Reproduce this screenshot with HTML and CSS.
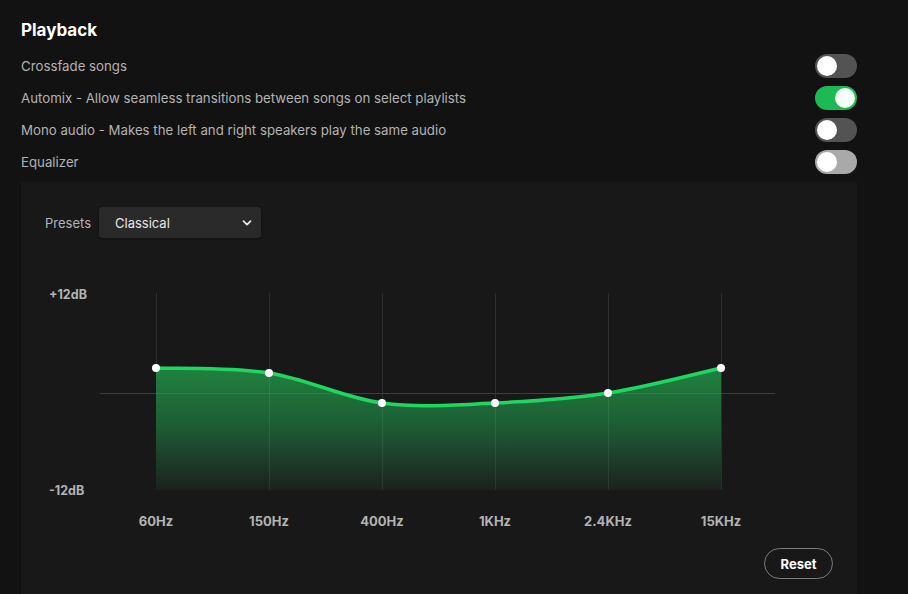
FILE: index.html
```html
<!DOCTYPE html>
<html>
<head>
<meta charset="utf-8">
<link rel="stylesheet" href="styles.css">
</head>
<body>
<div class="page">
  <h2 class="title">Playback</h2>
  <div class="row"><span class="label">Crossfade songs</span><span class="toggle"><span class="knob"></span></span></div>
  <div class="row"><span class="label">Automix - Allow seamless transitions between songs on select playlists</span><span class="toggle on"><span class="knob"></span></span></div>
  <div class="row"><span class="label">Mono audio - Makes the left and right speakers play the same audio</span><span class="toggle"><span class="knob"></span></span></div>
  <div class="row"><span class="label">Equalizer</span><span class="toggle light"><span class="knob"></span></span></div>

  <div class="panel">
    <div class="presets">
      <span class="presets-label">Presets</span>
      <div class="select">
        <span>Classical</span>
        <svg class="chev" width="10" height="8" viewBox="0 0 10 8"><path d="M1.5 2.2 L5 5.6 L8.5 2.2" fill="none" stroke="#e8e8e8" stroke-width="1.8" stroke-linecap="round" stroke-linejoin="round"/></svg>
      </div>
    </div>
    <div class="chart">
      <div class="db">
        <span>+12dB</span>
        <span>-12dB</span>
      </div>
      <svg class="graph" width="675" height="216" viewBox="0 0 675 216">
        <defs>
          <linearGradient id="g" x1="0" y1="83" x2="0" y2="205" gradientUnits="userSpaceOnUse">
            <stop offset="0" stop-color="#20823f"/>
            <stop offset="0.5" stop-color="#1d5a34"/>
            <stop offset="1" stop-color="#1b211d"/>
          </linearGradient>
        </defs>
        <line x1="0" y1="108.5" x2="675" y2="108.5" stroke="#2e2e2e" stroke-width="1"/>
        <g stroke="#2e2e2e" stroke-width="1">
          <line x1="56.5" y1="8" x2="56.5" y2="205"/>
          <line x1="169.5" y1="8" x2="169.5" y2="205"/>
          <line x1="282.5" y1="8" x2="282.5" y2="205"/>
          <line x1="395.5" y1="8" x2="395.5" y2="205"/>
          <line x1="508.5" y1="8" x2="508.5" y2="205"/>
          <line x1="621.5" y1="8" x2="621.5" y2="205"/>
        </g>
        <path d="M56,83 C74.8,83.8 131.3,82.2 169,88 C206.7,93.8 244.3,113 282,118 C319.7,123 357.3,119.7 395,118 C432.7,116.3 470.3,113.8 508,108 C545.7,102.2 602.2,87.2 621,83 L621,205 L56,205 Z" fill="url(#g)"/>
        <g stroke="rgba(255,255,255,0.08)" stroke-width="1">
          <line x1="0" y1="108.5" x2="675" y2="108.5"/>
          <line x1="169.5" y1="88" x2="169.5" y2="205"/>
          <line x1="282.5" y1="118" x2="282.5" y2="205"/>
          <line x1="395.5" y1="118" x2="395.5" y2="205"/>
          <line x1="508.5" y1="108" x2="508.5" y2="205"/>
        </g>
        <path d="M56,83 C74.8,83.8 131.3,82.2 169,88 C206.7,93.8 244.3,113 282,118 C319.7,123 357.3,119.7 395,118 C432.7,116.3 470.3,113.8 508,108 C545.7,102.2 602.2,87.2 621,83" fill="none" stroke="#1ed760" stroke-width="3.5" stroke-linecap="round"/>
        <g fill="#ffffff">
          <circle cx="56" cy="83" r="4"/>
          <circle cx="169" cy="88" r="4"/>
          <circle cx="282" cy="118" r="4"/>
          <circle cx="395" cy="118" r="4"/>
          <circle cx="508" cy="108" r="4"/>
          <circle cx="621" cy="83" r="4"/>
        </g>
      </svg>
    </div>
    <div class="freqs">
      <span>60Hz</span><span>150Hz</span><span>400Hz</span><span>1KHz</span><span>2.4KHz</span><span>15KHz</span>
    </div>
    <div class="actions">
      <button class="reset">Reset</button>
    </div>
  </div>
</div>
</body>
</html>
```

FILE: styles.css
```css
* { box-sizing: border-box; }
html, body { margin: 0; padding: 0; background: #121212; height: 100%; overflow: hidden; }
body { font-family: "Inter", "Noto Sans", sans-serif; color: #b3b3b3; }
.page { width: 878px; padding: 18px 0 0 21px; }
.title { margin: 0 0 8px 0; font-size: 17px; line-height: 24px; font-weight: 700; color: #ffffff; width: 836px; }
.row { width: 836px; height: 32px; display: flex; align-items: center; justify-content: space-between; }
.label { font-size: 13.25px; color: #b3b3b3; }
.toggle { width: 42px; height: 24px; border-radius: 12px; background: #535353; display: flex; align-items: center; padding: 0 2px; }
.toggle .knob { width: 20px; height: 20px; border-radius: 50%; background: #ffffff; }
.toggle.on { background: #1db954; justify-content: flex-end; }
.toggle.on .knob { background: #f4fff7; }
.toggle.light { background: #a9a9a9; }
.panel { width: 836px; margin-top: 4px; background: #181818; padding: 25px 24px 40px 24px; height: 440px; }
.presets { display: flex; align-items: center; height: 31px; }
.presets-label { font-size: 13px; color: #b3b3b3; width: 54px; }
.select { width: 162px; height: 31px; background: #2a2a2a; border-radius: 4px; display: flex; align-items: center; justify-content: space-between; padding: 0 9px 0 16px; font-size: 13px; color: #e6e6e6; box-shadow: 0 1px 3px rgba(0,0,0,0.3); }
.chart { display: flex; margin-top: 47px; height: 216px; }
.db { width: 55px; height: 216px; padding: 2px 0 2px 4px; display: flex; flex-direction: column; justify-content: space-between; font-size: 12.5px; font-weight: 700; line-height: 16px; color: #b3b3b3; }
.graph { display: block; }
.freqs { display: flex; padding-left: 54.5px; margin-top: 12px; }
.freqs span { width: 113px; text-align: center; font-size: 13px; font-weight: 700; line-height: 16px; color: #b3b3b3; }
.actions { display: flex; justify-content: flex-end; margin-top: 19px; }
.reset { width: 69px; height: 31px; border-radius: 16px; border: 1px solid #7c7c7c; background: transparent; color: #ffffff; font-family: "Inter", "Noto Sans", sans-serif; font-size: 13px; font-weight: 700; padding: 0; }
```
